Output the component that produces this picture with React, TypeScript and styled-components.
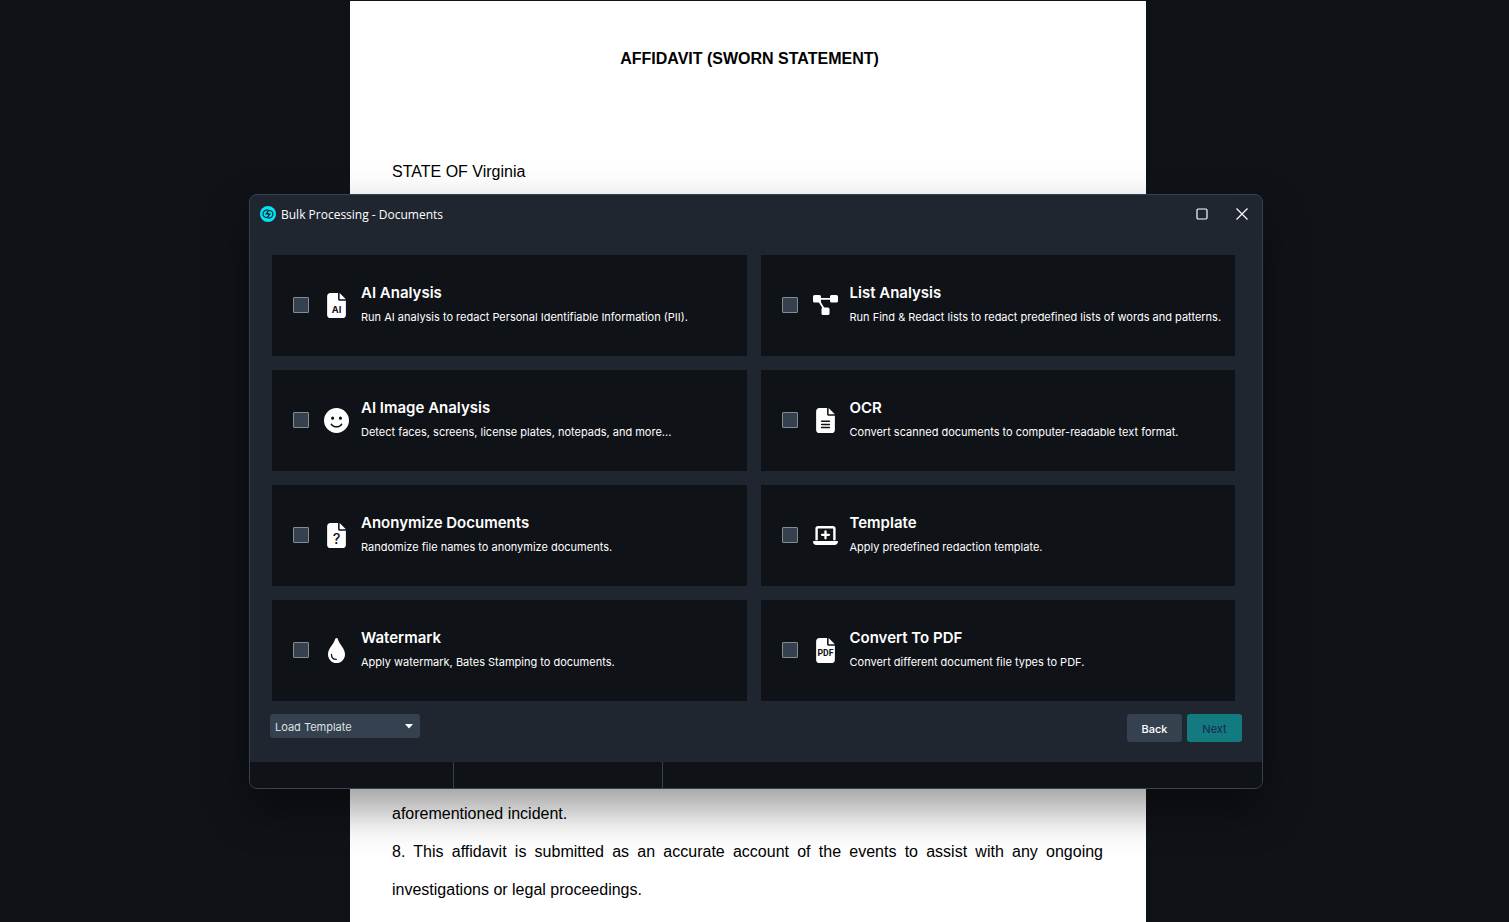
import React from "react";
import styled, { createGlobalStyle } from "styled-components";
import { FaFaceSmile, FaFileLines } from "react-icons/fa6";

const GlobalStyle = createGlobalStyle`
  *, *::before, *::after { box-sizing: border-box; }
  body {
    margin: 0;
    background: #0f1217;
    font-family: Inter, "Liberation Sans", sans-serif;
  }
  h1, h2, h3, p { margin: 0; }
`;

const Stage = styled.div`
  position: relative;
  height: 100vh;
  overflow: hidden;
  display: flex;
  justify-content: center;
  padding: 1px 13px 0 0;
`;

const Paper = styled.article`
  width: 100%;
  max-width: 796px;
  min-height: 100%;
  padding: 39px 43px 0 42px;
  background: #fff;
  color: #000;
  font-family: "Liberation Sans", Arial, sans-serif;
  font-size: 16px;
  line-height: 38px;
`;

const PaperTitle = styled.h1`
  padding-left: 4px;
  font-size: 16px;
  font-weight: 700;
  text-align: center;
`;

const Paragraph = styled.p<{ $before?: number }>`
  margin-top: ${({ $before = 0 }) => $before}px;
  text-align: justify;
`;

const Overlay = styled.div`
  position: absolute;
  inset: 0;
  display: flex;
  justify-content: center;
  align-items: flex-start;
  padding: 194px 0 0 3px;
`;

const Dialog = styled.section`
  display: flex;
  flex-direction: column;
  width: 100%;
  max-width: 1014px;
  overflow: hidden;
  border: 1px solid #36424f;
  border-radius: 8px;
  background: #20262f;
  color: #fff;
  box-shadow: 0 20px 44px rgba(0, 0, 0, 0.4);
`;

const TitleBar = styled.header`
  display: flex;
  align-items: center;
  height: 38px;
  padding-left: 10px;
`;

const WindowTitle = styled.h2`
  flex: 1;
  margin-left: 5px;
  font-family: "Open Sans", "Noto Sans", sans-serif;
  font-size: 12px;
  font-weight: 400;
`;

const WindowButton = styled.button`
  display: grid;
  place-items: center;
  width: 40px;
  height: 38px;
  padding: 0;
  border: 0;
  background: none;
  color: #fff;
`;

const Options = styled.div`
  display: grid;
  grid-template-columns: 1fr 1fr;
  grid-auto-rows: 101px;
  gap: 14px;
  padding: 22px 27px 0 22px;
`;

const Card = styled.label`
  display: flex;
  align-items: center;
  padding: 0 8px 1px 21px;
  background: #0f1217;
`;

const Tick = styled.input`
  appearance: none;
  flex: none;
  width: 16px;
  height: 16px;
  margin: 0 15px 0 0;
  border: 1px solid #858b91;
  border-radius: 1px;
  background: #36414f;
  &:checked { background: #137b80; }
`;

const IconSlot = styled.span`
  display: grid;
  place-items: center;
  flex: none;
  width: 25px;
  height: 26px;
  margin-right: 12px;
`;

const CardText = styled.span`
  display: flex;
  flex-direction: column;
  line-height: 24px;
  white-space: nowrap;
`;

const CardTitle = styled.strong`
  font-size: 15px;
  font-weight: 600;
`;

const CardHint = styled.span`
  font-size: 11px;
`;

const Footer = styled.footer`
  display: flex;
  align-items: flex-start;
  gap: 5px;
  padding: 13px 20px 20px;
`;

const SelectBox = styled.div`
  position: relative;
  width: 150px;
  margin-right: auto;
  svg {
    position: absolute;
    top: 10px;
    right: 7px;
    pointer-events: none;
  }
`;

const Select = styled.select`
  appearance: none;
  display: block;
  width: 100%;
  height: 24px;
  padding: 2px 5px 0;
  border: 0;
  border-radius: 3px;
  background: #36414f;
  color: #dde0e3;
  font: 11px Inter, sans-serif;
`;

const ActionButton = styled.button<{ $primary?: boolean }>`
  width: 55px;
  height: 28px;
  padding: 2px 0 0;
  border: 0;
  border-radius: 3px;
  background: ${({ $primary }) => ($primary ? "#137b80" : "#36414f")};
  color: ${({ $primary }) => ($primary ? "#14284b" : "#fff")};
  font: ${({ $primary }) => ($primary ? 400 : 500)} 11px Inter, sans-serif;
`;

const StatusBar = styled.div`
  display: grid;
  grid-template-columns: 204px 209px 1fr;
  height: 26px;
  background: #0f1217;
`;

const StatusCell = styled.div`
  border-right: 1px solid #36424f;
  &:last-child { border-right: 0; }
`;

const Logo = () => (
  <svg width="16" height="16" viewBox="0 0 16 16" aria-hidden="true">
    <circle cx="8" cy="8" r="8" fill="#06e2f5" />
    <g fill="none" stroke="#0d2c38" strokeWidth="1.2" strokeLinecap="round">
      <path d="M8.600 4.200C5.600 3.300 3 5.200 3 7.900c0 2.300 1.800 3.700 3.700 3.500 1.900-.2 2.700-2 1.900-3.400-.7-1.100-2.400-1-2.700.1" />
      <path d="M7.400 11.800c3 .9 5.600-1 5.600-3.700 0-2.300-1.800-3.700-3.700-3.500-1.900.2-2.700 2-1.900 3.400.7 1.100 2.400 1 2.700-.1" />
    </g>
  </svg>
);

const FlowIcon = () => (
  <svg width="25" height="20" viewBox="0 0 25 20" aria-hidden="true">
    <g fill="#fff">
      <rect x="0" y="0" width="8" height="7.600" rx="1.600" />
      <rect x="17" y="0" width="8" height="7.600" rx="1.600" />
      <rect x="8.500" y="12.400" width="8" height="7.600" rx="1.600" />
    </g>
    <path d="M6 3.800h13M5.500 5l5.500 9" stroke="#fff" strokeWidth="1.800" />
  </svg>
);

const LaptopIcon = () => (
  <svg width="25" height="19" viewBox="0 0 25 19" aria-hidden="true">
    <path d="M3.600 14.200V2.600A1.400 1.400 0 0 1 5 1.200h15a1.400 1.400 0 0 1 1.400 1.400v11.600" fill="none" stroke="#fff" strokeWidth="2.400" />
    <path d="M.7 14.900h23.600c.4 0 .7.300.7.700 0 1.900-1.500 3.400-3.400 3.400H3.400A3.400 3.400 0 0 1 0 15.600c0-.4.3-.7.7-.7z" fill="#fff" />
    <path d="M12.500 5.300v7M9 8.800h7" stroke="#fff" strokeWidth="2.300" strokeLinecap="round" />
  </svg>
);

const DropIcon = () => (
  <svg width="17" height="25" viewBox="0 0 17 25" aria-hidden="true">
    <path d="M8.500 0c.6 0 1.100.4 1.300 1.100C11.400 6.800 17 10.300 17 16.400 17 21.200 13.200 25 8.500 25S0 21.200 0 16.400C0 10.300 5.600 6.800 7.200 1.100 7.400.4 7.900 0 8.500 0z" fill="#fff" />
    <path d="M3.500 16.500c0 2.900 2 4.900 4.800 4.900" fill="none" stroke="#0f1217" strokeWidth="1.300" strokeLinecap="round" />
  </svg>
);

type FileBadgeProps = { text: string; size: number; weight?: number; y?: number; family?: string };

const FileBadge = ({ text, size, weight = 700, y = 408, family = "Inter" }: FileBadgeProps) => (
  <svg width="19" height="25" viewBox="0 0 384 512" aria-hidden="true">
    <path
      fill="#fff"
      d="M0 64C0 28.700 28.700 0 64 0H224V128c0 17.700 14.300 32 32 32H384V448c0 35.300-28.700 64-64 64H64c-35.300 0-64-28.700-64-64V64zm384 64H256V0L384 128z"
    />
    <text x="192" y={y} textAnchor="middle" fontFamily={`${family}, sans-serif`} fontSize={size} fontWeight={weight} fill="#0f1217">
      {text}
    </text>
  </svg>
);

const options = [
  {
    title: "AI Analysis",
    hint: "Run AI analysis to redact Personal Identifiable Information (PII).",
    icon: <FileBadge text="AI" size={190} />,
  },
  {
    title: "List Analysis",
    hint: "Run Find & Redact lists to redact predefined lists of words and patterns.",
    icon: <FlowIcon />,
  },
  {
    title: "AI Image Analysis",
    hint: "Detect faces, screens, license plates, notepads, and more...",
    icon: <FaFaceSmile size={25} />,
  },
  {
    title: "OCR",
    hint: "Convert scanned documents to computer-readable text format.",
    icon: <FaFileLines size={25} />,
  },
  {
    title: "Anonymize Documents",
    hint: "Randomize file names to anonymize documents.",
    icon: <FileBadge text="?" size={300} weight={500} y={440} />,
  },
  {
    title: "Template",
    hint: "Apply predefined redaction template.",
    icon: <LaptopIcon />,
  },
  {
    title: "Watermark",
    hint: "Apply watermark, Bates Stamping to documents.",
    icon: <DropIcon />,
  },
  {
    title: "Convert To PDF",
    hint: "Convert different document file types to PDF.",
    icon: <FileBadge text="PDF" size={178} y={375} family="Roboto" />,
  },
];

export default function App() {
  return (
    <Stage>
      <GlobalStyle />
      <Paper>
        <PaperTitle>AFFIDAVIT (SWORN STATEMENT)</PaperTitle>
        <Paragraph $before={75}>STATE OF Virginia</Paragraph>
        <Paragraph $before={604}>aforementioned incident.</Paragraph>
        <Paragraph>
          8. This affidavit is submitted as an accurate account of the events to assist with any ongoing
          investigations or legal proceedings.
        </Paragraph>
      </Paper>
      <Overlay>
        <Dialog role="dialog" aria-labelledby="dialog-title">
          <TitleBar>
            <Logo />
            <WindowTitle id="dialog-title">Bulk Processing - Documents</WindowTitle>
            <WindowButton type="button" aria-label="Maximize">
              <svg width="12" height="12" viewBox="0 0 12 12" fill="none" stroke="currentColor">
                <rect x="1" y="1" width="10" height="10" rx="1.200" strokeWidth="1.200" />
              </svg>
            </WindowButton>
            <WindowButton type="button" aria-label="Close">
              <svg width="12" height="12" viewBox="0 0 12 12" fill="none" stroke="currentColor">
                <path d="M.5.5l11 11M11.500.5l-11 11" strokeWidth="1.200" />
              </svg>
            </WindowButton>
          </TitleBar>
          <Options>
            {options.map(({ title, hint, icon }) => (
              <Card key={title}>
                <Tick type="checkbox" />
                <IconSlot>{icon}</IconSlot>
                <CardText>
                  <CardTitle>{title}</CardTitle>
                  <CardHint>{hint}</CardHint>
                </CardText>
              </Card>
            ))}
          </Options>
          <Footer>
            <SelectBox>
              <Select aria-label="Load Template" defaultValue="load">
                <option value="load">Load Template</option>
              </Select>
              <svg width="8" height="5" viewBox="0 0 8 5" aria-hidden="true">
                <path d="M0 0h8L4 4.500z" fill="#fff" />
              </svg>
            </SelectBox>
            <ActionButton type="button">Back</ActionButton>
            <ActionButton type="button" $primary>
              Next
            </ActionButton>
          </Footer>
          <StatusBar>
            <StatusCell />
            <StatusCell />
            <StatusCell />
          </StatusBar>
        </Dialog>
      </Overlay>
    </Stage>
  );
}
